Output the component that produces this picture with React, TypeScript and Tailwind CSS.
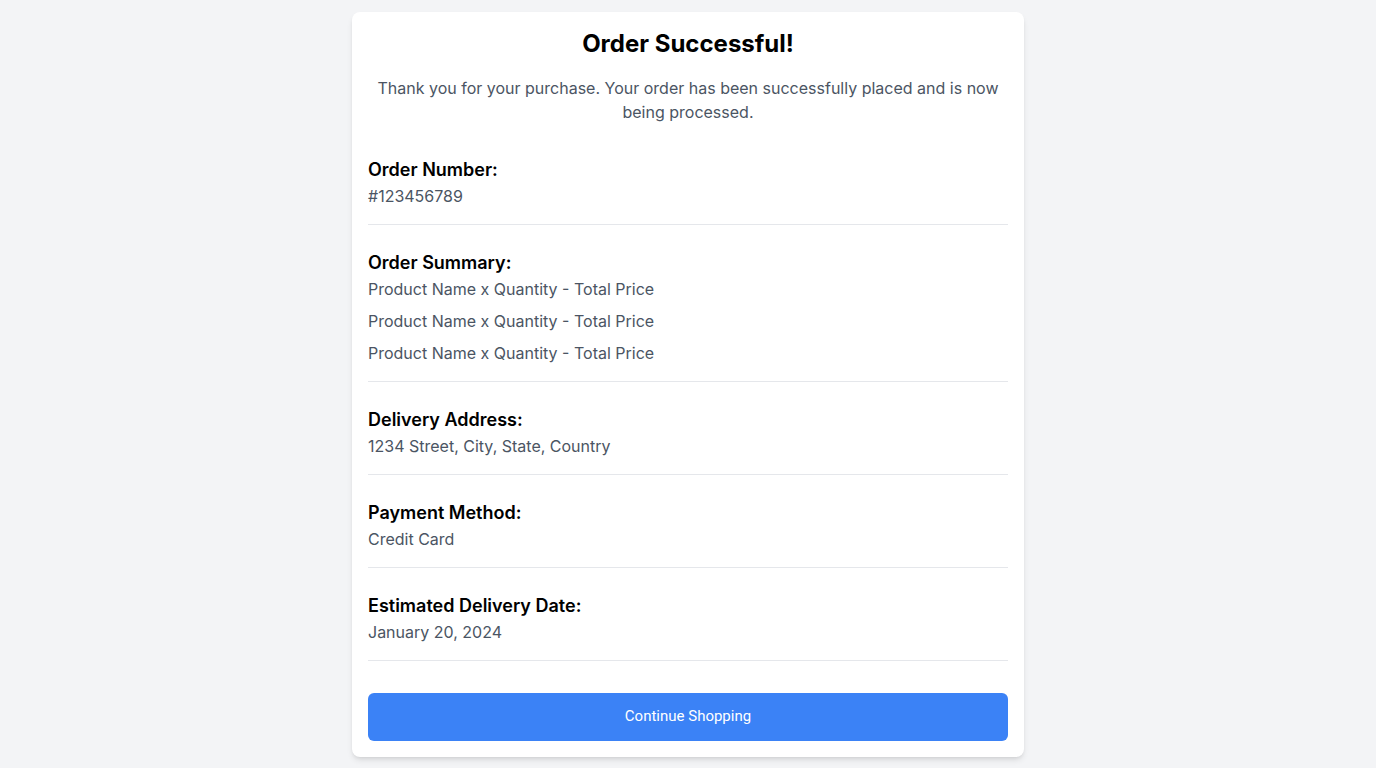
import React from "react";

type Section = {
  title: string;
  lines: string[];
};

const sections: Section[] = [
  { title: "Order Number:", lines: ["#123456789"] },
  {
    title: "Order Summary:",
    lines: [
      "Product Name x Quantity - Total Price",
      "Product Name x Quantity - Total Price",
      "Product Name x Quantity - Total Price",
    ],
  },
  { title: "Delivery Address:", lines: ["1234 Street, City, State, Country"] },
  { title: "Payment Method:", lines: ["Credit Card"] },
  { title: "Estimated Delivery Date:", lines: ["January 20, 2024"] },
];

export default function App() {
  return (
    <div className="min-h-screen bg-[#f3f4f6] flex items-center justify-center font-['Inter',sans-serif]">
      <div className="w-full max-w-2xl bg-white rounded-lg shadow-md p-4">
        {/* Header */}
        <h1 className="text-2xl font-bold text-center text-black mb-4">
          Order Successful!
        </h1>
        <p className="text-base text-[#4b5563] text-center mb-4 px-2">
          Thank you for your purchase. Your order has been successfully placed
          and is now being processed.
        </p>

        {/* Details */}
        {sections.map((section) => (
          <div
            key={section.title}
            className="pt-4 pb-4 mb-2 border-b border-[#e5e7eb]"
          >
            <h2 className="text-lg font-semibold text-black">
              {section.title}
            </h2>
            <div className="space-y-2">
              {section.lines.map((line, i) => (
                <p key={i} className="text-base text-[#4b5563]">
                  {line}
                </p>
              ))}
            </div>
          </div>
        ))}

        <button className="w-full mt-6 h-12 bg-[#3b82f6] hover:bg-[#2563eb] text-white text-[15px] font-['Roboto',sans-serif] rounded-md">
          Continue Shopping
        </button>
      </div>
    </div>
  );
}
